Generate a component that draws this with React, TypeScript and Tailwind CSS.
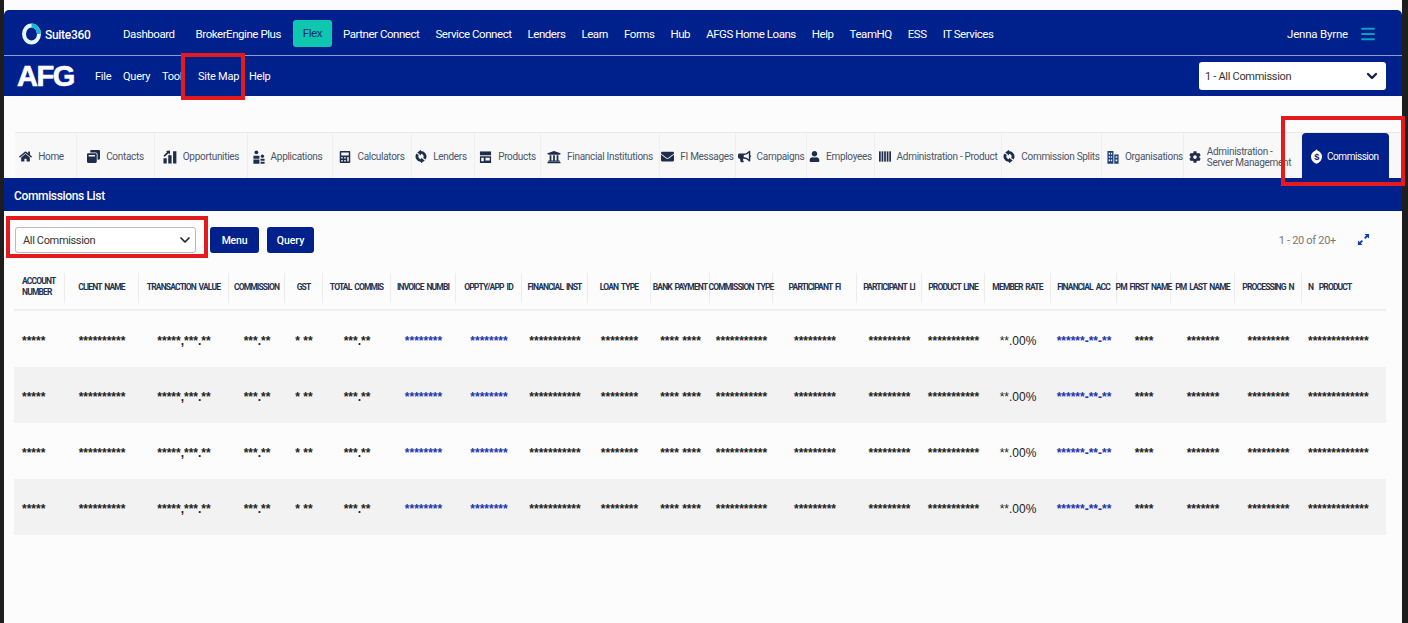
import {
  FaBullhorn,
  FaCalculator,
  FaCog,
  FaEnvelope,
  FaHome,
  FaUniversity,
  FaUser,
  FaWindowRestore,
} from "react-icons/fa";
import { ChevronDown, Menu } from "lucide-react";
import type { ReactNode } from "react";

const topLinks = [
  "Dashboard",
  "BrokerEngine Plus",
  "Flex",
  "Partner Connect",
  "Service Connect",
  "Lenders",
  "Learn",
  "Forms",
  "Hub",
  "AFGS Home Loans",
  "Help",
  "TeamHQ",
  "ESS",
  "IT Services",
];

function Swirl() {
  return (
    <svg viewBox="0 0 16 16" className="h-[15px] w-[12px]" fill="#1f2d4d">
      <path d="M8 2.500a5.500 5.500 0 0 1 4.500 8.500" fill="none" stroke="#1f2d4d" strokeWidth="3.800" />
      <path d="M8 -1v7.500L3 2.800z" />
      <path d="M8 13.500a5.500 5.500 0 0 1-4.500-8.500" fill="none" stroke="#1f2d4d" strokeWidth="3.800" />
      <path d="M8 17V9.500l5 3.700z" />
    </svg>
  );
}

function BarsIcon() {
  return (
    <svg viewBox="0 0 16 16" className="h-[15px] w-[14px]" fill="#1f2d4d">
      <rect x="0.500" y="10" width="3.800" height="6" />
      <rect x="6" y="6.500" width="3.800" height="9.500" />
      <rect x="11.500" y="2" width="3.800" height="14" />
      <path d="M0.500 7l4.200-4.200-1.400-1L8 1v4.400L6.300 4.200 1.800 8.400z" />
    </svg>
  );
}

function PeopleIcon() {
  return (
    <svg viewBox="0 0 14 16" className="h-[14px] w-[12px]" fill="#1f2d4d">
      <circle cx="4" cy="2.500" r="2.200" />
      <path d="M0.500 6.500h7V10h-7zM0.500 11h7V16h-7z" />
      <circle cx="11" cy="7" r="1.900" />
      <path d="M8.800 10h4.700v2.500H8.800zM8.800 13.500h4.700V16H8.800z" />
    </svg>
  );
}

function StoreIcon() {
  return (
    <svg viewBox="0 0 14 14" className="h-[12px] w-[13px]" fill="#1f2d4d">
      <path d="M0.500 0.500h13V5H.5z" />
      <path fillRule="evenodd" d="M0.500 6h13v8H.5zM2 8v4h3V8zM7 8v3h5V8z" />
    </svg>
  );
}

function BarcodeIcon() {
  return (
    <svg viewBox="0 0 14 14" className="h-[13px] w-[12px]" fill="#1f2d4d">
      <rect x="0" y="1" width="2" height="12" />
      <rect x="3" y="1" width="2" height="12" />
      <rect x="6" y="1" width="2" height="12" />
      <rect x="9" y="1" width="2" height="12" />
      <rect x="12" y="1" width="2" height="12" />
    </svg>
  );
}

function OrgIcon() {
  return (
    <svg viewBox="0 0 14 16" className="h-[14px] w-[12px]" fill="#1f3f7a">
      <path fillRule="evenodd" d="M0.500 1h7v15h-7zM2 3v2h1.500V3zM4.500 3v2H6V3zM2 7v2h1.500V7zM4.500 7v2H6V7zM2 11v2h1.500v-2zM4.500 11v2H6v-2z" />
      <path fillRule="evenodd" d="M8.500 5h5v11h-5zM10 7v2h2V7zM10 11v2h2v-2z" />
    </svg>
  );
}

function CoinIcon() {
  return (
    <svg viewBox="0 0 12 16" className="h-[15px] w-[11px]">
      <path d="M6 0c.7 1.200 1.500 1.800 3 2.600 1.800 1.300 3 3.200 3 5.400 0 3.500-2.400 6.700-6 8-3.600-1.300-6-4.500-6-8 0-2.200 1.200-4.100 3-5.400C4.500 1.800 5.300 1.200 6 0z" fill="#fff" />
      <text x="6" y="12" textAnchor="middle" fontSize="10" fontWeight="700" fontFamily="Liberation Sans, sans-serif" fill="#00208c">$</text>
    </svg>
  );
}

function SuiteLogo() {
  return (
    <svg viewBox="0 0 19 22" className="h-[22px] w-[19px]" fill="none">
      <ellipse cx="9.500" cy="11" rx="7.500" ry="8.500" stroke="#e6f7fa" strokeWidth="4" />
      <path d="M9.500 2.500a7.500 8.500 0 0 1 7.500 8.500" stroke="#18b6d6" strokeWidth="4" />
    </svg>
  );
}

type Tab = { label: ReactNode; icon: ReactNode; width: string };

const tabs: Tab[] = [
  { label: "Home", icon: <FaHome size={13} />, width: "w-[62px] pr-[8px]" },
  { label: "Contacts", icon: <FaWindowRestore size={13} />, width: "w-[78px]" },
  { label: "Opportunities", icon: <BarsIcon />, width: "w-[93px]" },
  { label: "Applications", icon: <PeopleIcon />, width: "w-[85px] pr-[5px]" },
  { label: "Calculators", icon: <FaCalculator size={12} />, width: "w-[79px]" },
  { label: "Lenders", icon: <Swirl />, width: "w-[63px] pr-[4px]" },
  { label: "Products", icon: <StoreIcon />, width: "w-[66px]" },
  { label: "Financial Institutions", icon: <FaUniversity size={14} />, width: "w-[119px]" },
  { label: "FI Messages", icon: <FaEnvelope size={13} />, width: "w-[76px]" },
  { label: "Campaigns", icon: <FaBullhorn size={13} />, width: "w-[71px]" },
  { label: "Employees", icon: <FaUser size={11} />, width: "w-[68px]" },
  { label: "Administration - Product", icon: <BarcodeIcon />, width: "w-[127px]" },
  { label: "Commission Splits", icon: <Swirl />, width: "w-[100px]" },
  { label: "Organisations", icon: <OrgIcon />, width: "w-[82px] pl-[5px]" },
  {
    label: (
      <span className="block leading-[11px]">
        Administration -<br />
        Server Management
      </span>
    ),
    icon: <FaCog size={12} />,
    width: "w-[118px] pr-[5px]",
  },
];

type Col = { head: ReactNode; value: string; blue?: boolean; plain?: boolean; pad?: string };

const cols: Col[] = [
  { head: <>ACCOUNT<br />NUMBER</>, value: "*****", pad: "pl-[8px]" },
  { head: "CLIENT NAME", value: "**********" },
  { head: "TRANSACTION VALUE", value: "*****,***.**" },
  { head: "COMMISSION", value: "***.**" },
  { head: "GST", value: "* **" },
  { head: "TOTAL COMMIS", value: "***.**" },
  { head: "INVOICE NUMBI", value: "********", blue: true },
  { head: "OPPTY/APP ID", value: "********", blue: true },
  { head: "FINANCIAL INST", value: "***********" },
  { head: "LOAN TYPE", value: "********" },
  { head: "BANK PAYMENT", value: "**** ****" },
  { head: "COMMISSION TYPE", value: "***********" },
  { head: "PARTICIPANT FI", value: "*********" },
  { head: "PARTICIPANT LI", value: "*********" },
  { head: "PRODUCT LINE", value: "***********" },
  { head: "MEMBER RATE", value: "**.00%", plain: true },
  { head: "FINANCIAL ACC", value: "******-**-**", blue: true },
  { head: "PM FIRST NAME", value: "****" },
  { head: "PM LAST NAME", value: "*******" },
  { head: "PROCESSING N", value: "*********" },
  { head: "N  PRODUCT", value: "*************", pad: "pl-[6px]" },
];

const gridCols =
  "grid grid-cols-[51px_74px_90px_56px_38px_68px_65px_66px_66px_63px_59px_63px_84px_65px_63px_66px_66px_54px_64px_67px_84px]";

function TopBar() {
  return (
    <div className="flex h-[46px] items-center rounded-t-[5px] border-b border-[#8f9ccc] bg-[#00208c] pt-[2px] pl-[18px] pr-[25px] text-white">
      <div className="flex w-[93px] items-center gap-[4px]">
        <SuiteLogo />
        <span className="pt-[2px] text-[12px] font-medium tracking-[-0.3px]">Suite360</span>
      </div>
      <nav className="flex items-center text-[11.5px] tracking-[-0.45px]">
        {topLinks.map((l) =>
          l === "Flex" ? (
            <span key={l} className="mr-[3px] ml-[4px] flex h-[27px] w-[39px] items-center justify-center rounded-[3px] bg-[#0ec7ae] pt-[1px] text-[#10306e]">
              {l}
            </span>
          ) : (
            <span key={l} className={`px-[8px] pt-[2px] whitespace-nowrap ${l === "Dashboard" ? "mr-[5px]" : ""}`}>
              {l}
            </span>
          ),
        )}
      </nav>
      <span className="ml-auto pt-[2px] text-[11.5px] tracking-[-0.2px]">Jenna Byrne</span>
      <Menu size={18} strokeWidth={2.5} className="ml-[11px] text-[#0e9fc0]" />
    </div>
  );
}

function MenuBar() {
  return (
    <div className="flex h-[40px] items-center bg-[#00208c] pl-[13px] pr-[16px] text-white">
      <span className="w-[78px] font-['Liberation_Sans',sans-serif] text-[29px] leading-none font-bold tracking-[-1.5px] [-webkit-text-stroke:0.6px_white]">AFG</span>
      <div className="flex items-center pt-[2px] text-[11px] tracking-[-0.25px]">
        <span className="w-[28px]">File</span>
        <span className="w-[39px]">Query</span>
        <span className="w-[36px]">Tool</span>
        <span className="w-[51px]">Site Map</span>
        <span>Help</span>
      </div>
      <div className="ml-auto flex h-[28px] w-[187px] items-center justify-between rounded-[3px] bg-white px-[6px] text-[11px] tracking-[-0.3px] text-[#333]">
        <span className="pt-[2px]">1 - All Commission</span>
        <ChevronDown size={16} strokeWidth={3.5} className="text-[#10204a]" />
      </div>
    </div>
  );
}

function Tabs() {
  return (
    <div className="ml-[11px] flex h-[46px] items-stretch border-t border-[#e8e8e8] bg-[#f8f8f8] text-[10px] tracking-[-0.3px] text-[#4a5568]">
      {tabs.map((t, i) => (
        <div key={i} className={`flex shrink-0 items-center justify-center gap-[6px] border-r border-[#efefef] pt-[2px] ${t.width}`}>
          <span className="flex shrink-0 justify-center text-[#1f2d4d]">{t.icon}</span>
          <span className="whitespace-nowrap">{t.label}</span>
        </div>
      ))}
      <div className="flex w-[87px] shrink-0 items-center gap-[5px] rounded-t-[4px] bg-[#00208c] pt-[2px] pl-[9px] tracking-[-0.45px] text-white">
        <CoinIcon />
        Commission
      </div>
    </div>
  );
}

function Toolbar() {
  return (
    <div className="flex h-[57px] items-center pl-[11px] pr-[32px]">
      <div className="flex h-[26px] w-[181px] items-center justify-between rounded-[3px] border border-[#bbb] bg-white pl-[7px] pr-[2px] text-[11px] tracking-[-0.35px] text-[#333]">
        <span className="pt-[4px]">All Commission</span>
        <ChevronDown size={16} strokeWidth={2.5} className="text-[#222]" />
      </div>
      <button className="ml-[14px] h-[26px] w-[49px] rounded-[3px] bg-[#00208c] pt-[2px] text-[10.5px] font-medium tracking-[-0.2px] text-white">Menu</button>
      <button className="ml-[8px] h-[26px] w-[47px] rounded-[3px] bg-[#00208c] pt-[2px] text-[10.5px] font-medium text-white">Query</button>
      <span className="ml-auto pt-[3px] text-[11px] tracking-[-0.3px] text-[#777]">1 - 20 of 20+</span>
      <svg viewBox="0 0 14 14" className="ml-[21px] h-[13px] w-[13px]" fill="#0a3fc0">
        <path d="M8 1h5v5l-1.800-1.800L9 6.400 7.600 5l2.200-2.200zM6 13H1V8l1.800 1.800L5 7.600 6.400 9l-2.200 2.200z" />
      </svg>
    </div>
  );
}

function Table() {
  return (
    <div className="ml-[10px] w-[1372px]">
      <div className={`${gridCols} h-[43px] items-start border-b-2 border-[#efefef] pt-[5px]`}>
        {cols.map((c, i) => (
          <div
            key={i}
            className={`flex h-[30px] items-center whitespace-pre pb-[2px] text-[8.5px] leading-[11px] font-bold tracking-[-0.85px] [word-spacing:1.5px] text-[#25324f] ${
              c.pad ? `justify-start ${c.pad}` : "justify-center"
            } ${i < cols.length - 1 ? "border-r border-[#ececec]" : ""}`}
          >
            <span>{c.head}</span>
          </div>
        ))}
      </div>
      {[0, 1, 2, 3].map((r) => (
        <div key={r} className={`${gridCols} h-[56px] items-center ${r % 2 === 1 ? "bg-[#f2f2f2]" : ""}`}>
          {cols.map((c, i) => (
            <div
              key={i}
              className={`whitespace-nowrap pt-[4px] font-['Liberation_Sans',sans-serif] text-[12px] ${
                c.pad ? `text-left ${c.pad}` : "text-center"
              } ${c.blue ? "text-[#1a36b0]" : "text-[#222]"} ${c.plain ? "" : "font-bold"}`}
            >
              {c.value}
            </div>
          ))}
        </div>
      ))}
    </div>
  );
}

export default function App() {
  return (
    <div className="relative h-[623px] w-[1408px] overflow-hidden bg-[#fcfcfc] px-[4px] font-['Roboto',sans-serif]">
      <div className="absolute inset-y-0 left-0 w-[4px] bg-[#1e1e1e]" />
      <div className="absolute inset-y-0 right-0 w-[6px] bg-[#1e1e1e]" />
      <div className="w-[1398px] pt-[10px]">
        <TopBar />
        <MenuBar />
        <div className="h-[36px]" />
        <Tabs />
        <div className="flex h-[33px] items-center bg-[#00208c] pt-[2px] pl-[10px] text-[12px] font-medium tracking-[-0.35px] text-white">Commissions List</div>
        <Toolbar />
        <Table />
      </div>
      <div className="absolute left-[181px] top-[53px] h-[47px] w-[64px] border-[4px] border-[#e31b1e]" />
      <div className="absolute left-[1281px] top-[116px] h-[70px] w-[124px] border-[4px] border-[#e31b1e]" />
      <div className="absolute left-[6px] top-[216px] h-[42px] w-[202px] border-[4px] border-[#e31b1e]" />
    </div>
  );
}
